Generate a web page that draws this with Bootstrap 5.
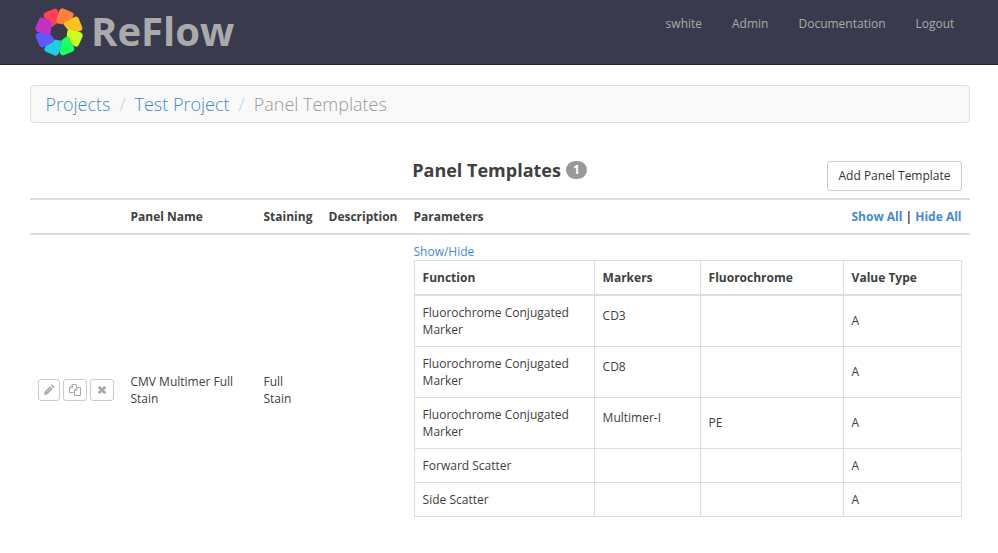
<!DOCTYPE html>
<html lang="en">
<head>
<meta charset="utf-8">
<meta name="viewport" content="width=device-width, initial-scale=1">
<title>ReFlow - Panel Templates</title>
<link rel="stylesheet" href="https://cdn.jsdelivr.net/npm/bootstrap@5.3.0/dist/css/bootstrap.min.css">
<style>
body{font-family:"Open Sans",sans-serif;font-size:12px;line-height:17px;color:#404040;background:#fff}
a{color:#428bca;text-decoration:none}
.topbar{height:65px;background:#3a3a4e;border-bottom:1px solid #222230}
.brand{padding-left:35px}
.brand-name{font-size:40px;font-weight:700;line-height:62px;color:#aaa;margin-left:8px}
.user-links{padding-right:28.6px}
.topbar .nav-link{color:#aaa;padding:15px;line-height:17px}
.page{padding:20px 28px 0 30px}
.crumbs{height:38px;background:#f9f9f9;border:1px solid #ddd;border-radius:4px;font-size:18px;font-weight:300;padding:0 14.4px;margin:0 0 38px}
.crumbs .breadcrumb-item{line-height:36px;color:#999}
.crumbs .breadcrumb-item+.breadcrumb-item{padding-left:9px}
.crumbs .breadcrumb-item+.breadcrumb-item::before{color:#ccc;padding-right:9px}
.heading{height:37px;margin-bottom:0}
.heading h1{font-size:18px;font-weight:700;line-height:18px;margin:0}
.heading-title{padding-left:7px;gap:5px}
.count{font-size:12px;line-height:12px;padding:3px 7px;border-radius:10px;background:#999;color:#fff}
.btn-add{width:135px;font-size:12px;line-height:18px;padding:5px 0;border:1px solid #ccc;border-radius:3px;color:#333}
.grid-list{table-layout:fixed;color:inherit;border-color:#ddd;border-collapse:collapse}
.grid-list>:not(caption)>*>*{padding:8px 8px 8px 7.5px;color:inherit;vertical-align:middle;border-color:#ddd}
.grid-outer>thead>tr>th{border-top:2px solid #ddd;border-bottom:2px solid #ddd}
.grid-outer>thead>tr>th:last-child{padding-right:8.5px}
.grid-outer>tbody>tr>td{border:0}
.grid-outer>tbody>tr>td:last-child{padding-bottom:28px}
.grid-inner>:not(caption)>*>*{border:1px solid #ddd;padding-left:8.1px}
.grid-inner>thead>tr>th{border-bottom:2px solid #ddd}
.grid-inner>tbody>tr>.marker-cell{padding-bottom:19px}
.grid-inner>tbody>.conjugated>.value-cell{padding-bottom:10px}
.tools{gap:3px;margin-left:.5px}
.btn-tool{width:24px;height:22px;padding:0;border:1px solid #ccc;border-radius:3px;color:#aaa}
.btn-tool:first-child{width:22px}
.btn-tool svg{display:block;margin:auto}
</style>
<script src="https://cdn.jsdelivr.net/npm/bootstrap@5.3.0/dist/js/bootstrap.bundle.min.js"></script>
</head>
<body>
<nav class="topbar d-flex justify-content-between align-items-start">
  <a class="brand d-flex align-items-center" href="#">
    <svg class="mt-1" width="48" height="50" viewBox="-24 -24 48 50" aria-hidden="true">
      <defs><path id="petal" d="M-13.6-19.8L-4.8-23.3Q-2-24-1.1-21.3L1.6-13.8Q2.2-11.6.1-10.5L-6.4-5.3Q-8.7-4-10.2-6.2L-15-15.2Q-16.2-18.5-13.6-19.8Z" stroke="#3a3a4e" stroke-opacity=".35" stroke-width=".3"/></defs>
      <use href="#petal" fill="#ff4058"/>
      <use href="#petal" fill="#ff803c" transform="rotate(45)"/>
      <use href="#petal" fill="#ffc020" transform="rotate(90)"/>
      <use href="#petal" fill="#ccff20" transform="rotate(135)"/>
      <use href="#petal" fill="#20ff60" transform="rotate(180)"/>
      <use href="#petal" fill="#20cce0" transform="rotate(225)"/>
      <use href="#petal" fill="#6058ff" transform="rotate(270)"/>
      <use href="#petal" fill="#c034c4" transform="rotate(315)"/>
    </svg>
    <span class="brand-name">ReFlow</span>
  </a>
  <ul class="nav user-links">
    <li><a class="nav-link" href="#">swhite</a></li>
    <li><a class="nav-link" href="#">Admin</a></li>
    <li><a class="nav-link" href="#">Documentation</a></li>
    <li><a class="nav-link" href="#">Logout</a></li>
  </ul>
</nav>
<main class="page">
  <ol class="breadcrumb crumbs">
    <li class="breadcrumb-item"><a href="#">Projects</a></li>
    <li class="breadcrumb-item"><a href="#">Test Project</a></li>
    <li class="breadcrumb-item active">Panel Templates</li>
  </ol>
  <div class="heading row g-0 align-items-start">
    <div class="col"></div>
    <div class="heading-title col-auto d-flex align-items-center"><h1>Panel Templates</h1><span class="badge count">1</span></div>
    <div class="col text-end pe-2"><button class="btn btn-add" type="button">Add Panel Template</button></div>
  </div>
  <table class="table grid-list grid-outer mb-0">
    <colgroup><col style="width:93px"><col style="width:133px"><col style="width:65px"><col style="width:85px"><col></colgroup>
    <thead><tr>
      <th></th><th>Panel Name</th><th>Staining</th><th>Description</th>
      <th><div class="d-flex justify-content-between"><span>Parameters</span><span><a href="#">Show All</a> | <a href="#">Hide All</a></span></div></th>
    </tr></thead>
    <tbody><tr>
      <td><div class="d-flex tools">
        <button class="btn btn-tool" type="button" aria-label="Edit"><svg width="12" height="12" viewBox="0 0 12 12" fill="currentColor"><path d="M1 11l.7-3.4L7 2.2l2.8 2.8-5.4 5.3zM7.7 1.5l.7-.7q.5-.4 1 0l1.8 1.8q.4.5 0 1l-.7.7z"/><path d="M3.6 8.1l4-4" stroke="#fff" stroke-width=".5" fill="none"/></svg></button>
        <button class="btn btn-tool" type="button" aria-label="Copy"><svg width="14" height="12" viewBox="0 0 14 12" fill="none" stroke="currentColor"><path d="M5.5 8.5h-4v-5l3-3h4v2.6M4.5.5v3h-3M8.8 3.5h3.7v8h-6v-5.5zM8.8 3.5V6.2H6.5"/></svg></button>
        <button class="btn btn-tool" type="button" aria-label="Delete"><svg width="10" height="10" viewBox="0 0 10 10" fill="none" stroke="currentColor" stroke-width="2.9"><path d="M1.7 1.7l6.6 6.6M8.3 1.7l-6.6 6.6"/></svg></button>
      </div></td>
      <td>CMV Multimer Full Stain</td><td>Full Stain</td><td></td>
      <td>
        <a class="d-block" href="#">Show/Hide</a>
        <table class="table grid-list grid-inner mb-0">
          <colgroup><col style="width:180px"><col style="width:106px"><col style="width:143px"><col></colgroup>
          <thead><tr><th>Function</th><th>Markers</th><th>Fluorochrome</th><th>Value Type</th></tr></thead>
          <tbody>
            <tr class="conjugated"><td>Fluorochrome Conjugated Marker</td><td class="marker-cell">CD3</td><td class="value-cell"></td><td class="value-cell">A</td></tr>
            <tr class="conjugated"><td>Fluorochrome Conjugated Marker</td><td class="marker-cell">CD8</td><td class="value-cell"></td><td class="value-cell">A</td></tr>
            <tr class="conjugated"><td>Fluorochrome Conjugated Marker</td><td class="marker-cell">Multimer-I</td><td class="value-cell">PE</td><td class="value-cell">A</td></tr>
            <tr><td>Forward Scatter</td><td></td><td></td><td>A</td></tr>
            <tr><td>Side Scatter</td><td></td><td></td><td>A</td></tr>
          </tbody>
        </table>
      </td>
    </tr></tbody>
  </table>
</main>
</body>
</html>
